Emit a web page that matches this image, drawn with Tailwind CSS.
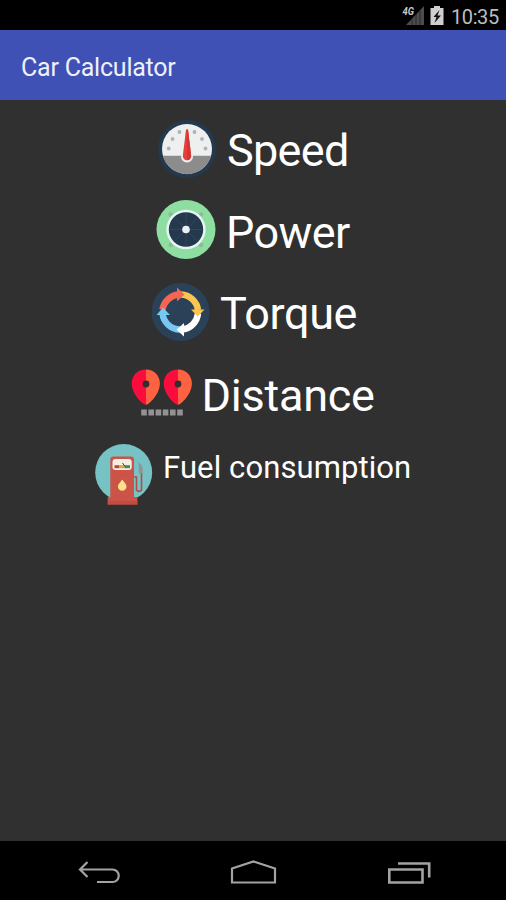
<!DOCTYPE html>
<html lang="en">
<head>
  <meta charset="UTF-8">
  <meta name="viewport" content="width=device-width, initial-scale=1.0">
  <title>Car Calculator</title>
  <script src="https://cdn.jsdelivr.net/npm/@tailwindcss/browser@4"></script>
</head>
<body class="bg-[#303030] font-['Roboto',sans-serif] text-white">
  <div class="flex h-[900px] w-[506px] flex-col overflow-hidden">
    <!-- Status bar -->
    <div class="flex h-[30px] shrink-0 items-center bg-black pl-[402px]">
      <svg class="h-[30px] w-[42px] shrink-0" viewBox="0 0 42 30">
        <text x="0.5" y="14.5" font-size="10" font-weight="700" font-style="italic" fill="#c8c8c8" textLength="11.500" lengthAdjust="spacingAndGlyphs">4G</text>
        <path d="M22 6V25H4z" fill="#4c4c4c"/>
        <path d="M10 18v7M14 14v11M18 10v15" stroke="#262626" stroke-width="1"/>
        <path d="M32 6h6v2h3.500v17h-13V8H32z" fill="#cfcfcf"/>
        <path d="M37.500 10l-6 7h3l-2 6 6.500-7.500h-3.500z" fill="#111"/>
      </svg>
      <span class="pt-1 pl-[7px] text-[20px] leading-none tracking-[-0.4px] text-[#bdbdbd]">10:35</span>
    </div>

    <!-- Toolbar -->
    <header class="flex h-[70px] shrink-0 items-center bg-[#4051b5] pl-[21px]">
      <h1 class="pt-1 text-[25px] leading-none tracking-[-0.22px] text-[#eef0fb]">Car Calculator</h1>
    </header>

    <main class="flex-1 pt-2">
      <a class="flex h-[81.5px] items-center pl-[157px]">
        <svg class="size-[60px] shrink-0" viewBox="0 0 60 60">
          <circle cx="30" cy="30" r="29" fill="#24384e"/>
          <circle cx="30" cy="30" r="25" fill="#eef0f0"/>
          <path d="M5.900 36.800h48.200a25 25 0 0 1-48.200 0z" fill="#8c8c8c"/>
          <g fill="#aeb2b4">
            <circle cx="11.700" cy="29.500" r="1.900"/><circle cx="15.500" cy="20" r="1.900"/><circle cx="22.500" cy="13" r="1.900"/>
            <circle cx="37.500" cy="13" r="1.900"/><circle cx="45" cy="20" r="1.900"/><circle cx="48.500" cy="29.500" r="1.900"/>
          </g>
          <circle cx="30" cy="37.500" r="6" fill="#eef0f0"/>
          <path d="M29 10.500h2l3.200 26.500a4.200 4.200 0 0 1-8.400 0z" fill="#e33f3c"/>
          <path d="M30 10.500h1l3.200 26.500a4.200 4.200 0 0 1-4.200 4.200z" fill="#d23634"/>
        </svg>
        <span class="pt-[3px] pl-[10px] text-[45px] leading-none tracking-[-0.7px]">Speed</span>
      </a>
      <a class="flex h-[81.5px] items-center pl-[156px]">
        <svg class="size-[60px] shrink-0" viewBox="0 0 60 60">
          <circle cx="30" cy="29.500" r="29.500" fill="#8edda1"/>
          <g fill="#8fb99b">
            <circle cx="14.700" cy="14.500" r="2.300"/><circle cx="45" cy="14.500" r="2.300"/>
            <circle cx="14.700" cy="45" r="2.300"/><circle cx="45" cy="45" r="2.300"/>
          </g>
          <circle cx="30" cy="29.500" r="19.700" fill="#e9f4f4"/>
          <circle cx="30" cy="29.500" r="17.200" fill="#24384e"/>
          <path d="M30 13v33M13.500 29.500h33M18.500 18l23 23M41.500 18l-23 23" stroke="#354b60" stroke-width="0.800"/>
          <circle cx="30" cy="29.500" r="3.800" fill="#e9f1f4"/>
        </svg>
        <span class="pt-1 pl-[10px] text-[45px] leading-none tracking-[-0.6px]">Power</span>
      </a>
      <a class="flex h-[81.5px] items-center pl-[150px]">
        <svg class="size-[60px] shrink-0" viewBox="0 0 60 60">
          <circle cx="30.500" cy="30" r="29" fill="#2a4158"/>
          <g fill="none" stroke-width="6.500">
            <path d="M12.500 27.500A18 18 0 0 1 28.500 12.500" stroke="#f4664f"/>
            <path d="M31 12.500A18 18 0 0 1 48 28" stroke="#fbc54f"/>
            <path d="M48 31.500A18 18 0 0 1 32.500 47.500" stroke="#fff"/>
            <path d="M30 47.500A18 18 0 0 1 12.500 31.500" stroke="#77c9f2"/>
          </g>
          <path d="M27 5.500L34.500 12.500L27 19.500z" fill="#f4664f"/>
          <path d="M41 27.500h13.500L47.700 34.500z" fill="#fbc54f"/>
          <path d="M34 41v13.500L26.500 47.700z" fill="#fff"/>
          <path d="M6.500 33h13.500L13 25.500z" fill="#77c9f2"/>
        </svg>
        <span class="pt-1 pl-[10px] text-[45px] leading-none tracking-[-0.4px]">Torque</span>
      </a>
      <a class="flex h-[81.5px] items-center pl-[131px]">
        <svg class="h-[60px] w-[62px] shrink-0" viewBox="0 0 62 60">
          <path d="M14.800 6.500C6.500 6.500.700 12.500.700 20.500c0 8 6 15.500 10.500 19.500q1.800 1.800 3.600 1.800z" fill="#fb0c3c"/>
          <path d="M14.800 6.500c8.300 0 14.100 6 14.100 14 0 8-6 15.500-10.500 19.500q-1.800 1.800-3.600 1.800z" fill="#ff6240"/>
          <circle cx="15" cy="21" r="3.400" fill="#303030"/>
          <path d="M46.800 6.500c-8.300 0-14.100 6-14.100 14 0 8 6 15.500 10.500 19.500q1.800 1.800 3.600 1.800z" fill="#fb0c3c"/>
          <path d="M46.800 6.500c8.300 0 14.100 6 14.100 14 0 8-6 15.500-10.500 19.500q-1.800 1.800-3.600 1.800z" fill="#ff6240"/>
          <circle cx="47" cy="21" r="3.400" fill="#303030"/>
          <path d="M10.200 49.500h42" stroke="#929292" stroke-width="5.800" stroke-dasharray="5.600 1.600"/>
        </svg>
        <span class="pt-1 pl-[8.5px] text-[45px] leading-none tracking-[-0.25px]">Distance</span>
      </a>
      <a class="flex h-[81.5px] items-center pl-[94px]">
        <svg class="h-[64px] w-[60px] shrink-0" viewBox="0 0 60 64">
          <circle cx="29.700" cy="29.500" r="28.500" fill="#76c2c5"/>
          <path d="M13.700 61.500V54h2.600V16.500a3 3 0 0 1 3-3h17.700a3 3 0 0 1 3 3V54h3.300v7.500z" fill="#cb5348"/>
          <path d="M13.700 58h29.600v3.500H13.700z" fill="#c24c43"/>
          <rect x="18.500" y="16" width="19.200" height="11" rx="3" fill="#f6efe6"/>
          <path d="M20.500 22.200h5v3h-5z" fill="#b64a34"/>
          <path d="M25.500 22.200h5v3h-5z" fill="#dda73b"/>
          <path d="M30.500 22.200h5.500v3h-5.500z" fill="#3f8c5a"/>
          <path d="M28.500 20l2.500 3.500" stroke="#4b3935" stroke-width="1"/>
          <path d="M28.200 36.500c2 3 4.300 4.500 4.300 7a4.300 4.300 0 0 1-8.600 0c0-2.500 2.500-4 4.300-7z" fill="#ffdf8a"/>
          <path d="M40 34h2.500v13a3 3 0 0 0 5 0V25" fill="none" stroke="#b04f48" stroke-width="1.600"/>
          <path d="M44.500 19l3.500 3.500v8h-3.200V23z" fill="#8c969a"/>
        </svg>
        <span class="pb-[15px] pl-[9px] text-[31px] leading-none tracking-[0.1px]">Fuel consumption</span>
      </a>
    </main>

    <!-- Navigation bar -->
    <nav class="flex h-[59px] shrink-0 items-center justify-between bg-black pt-[5px] pr-[75px] pl-[78px]">
      <svg class="h-[26px] w-[42px]" viewBox="0 0 42 26" fill="none" stroke="#a3a3a3" stroke-width="2.200">
        <path d="M9.500 2L2 9.500l7.500 7.500M2 9.500h32.500a6.200 6.200 0 0 1 0 12.500H19"/>
      </svg>
      <svg class="h-[26px] w-[47px]" viewBox="0 0 47 26" fill="none" stroke="#a3a3a3" stroke-width="2.200">
        <path d="M2 22.500V8.500L23.500 1.500 45 8.500v14z"/>
      </svg>
      <svg class="h-[26px] w-[44px]" viewBox="0 0 44 26" fill="none" stroke="#a3a3a3" stroke-width="2.600">
        <path d="M2.300 9.500h33.200v13H2.300zM11 3.500h31.200v14"/>
      </svg>
    </nav>
  </div>
</body>
</html>
